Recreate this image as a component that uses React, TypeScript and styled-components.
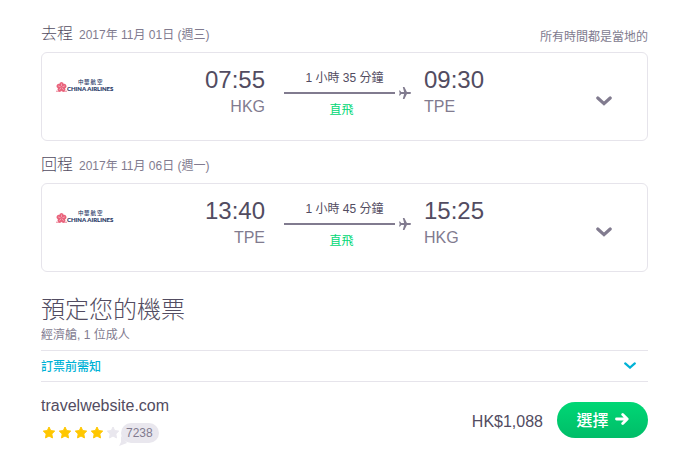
import React from "react";
import styled, { createGlobalStyle } from "styled-components";

const GlobalStyle = createGlobalStyle`
  *, *::before, *::after { box-sizing: border-box; }
  body {
    margin: 0;
    background: #fff;
    color: #524c61;
    font: 400 12px/18px "Liberation Sans", "Noto Sans CJK TC", sans-serif;
  }
  button { font-family: inherit; cursor: pointer; border: 0; background: none; padding: 0; }
  svg { display: block; flex: none; }
`;

const Page = styled.main`
  padding: 10px 38px 24px 41px;
`;

const LegHeader = styled.header`
  display: flex;
  align-items: baseline;
  height: 42px;
  padding-top: 12px;
`;

const LegTitle = styled.h2`
  margin: 0 6px 0 0;
  font-size: 16px;
  line-height: 24px;
  font-weight: 300;
`;

const Muted = styled.span`
  color: #817b8f;
`;

const LocalNote = styled(Muted)`
  margin-left: auto;
  align-self: flex-start;
  padding-top: 6px;
`;

const Card = styled.section`
  display: grid;
  grid-template-columns: 223fr 159fr 137fr 86px;
  min-height: 89px;
  border: 1px solid #e6e4eb;
  border-radius: 6px;
`;

const Departure = styled.div`
  display: flex;
  justify-content: space-between;
  padding-left: 14px;
  text-align: right;
`;

const LogoBox = styled.div`
  padding-top: 26px;
`;

const Stop = styled.div`
  padding-top: 12px;
`;

const Time = styled.div`
  font-size: 24px;
  line-height: 30px;
`;

const Airport = styled.div`
  font-size: 16px;
  line-height: 24px;
  color: #817b8f;
`;

const Route = styled.div`
  padding: 16px 13px 0 19px;
  text-align: center;
`;

const Duration = styled.div`
  padding-right: 6px;
`;

const Track = styled.div`
  display: flex;
  align-items: center;
  gap: 4px;
  height: 12px;
`;

const Line = styled.div`
  flex: 1;
  height: 2px;
  background: #817b8f;
`;

const Direct = styled.div`
  padding: 2px 12px 0 0;
  color: #00d775;
`;

const Toggle = styled.button`
  display: flex;
  align-items: center;
  justify-content: center;
  padding-top: 8px;
`;

const Booking = styled.section`
  padding-top: 22px;
`;

const BookingTitle = styled.h1`
  margin: 0;
  font-size: 24px;
  line-height: 32px;
  font-weight: 300;
`;

const Cabin = styled.p`
  margin: 0 0 6px;
  color: #817b8f;
`;

const Notice = styled.button`
  display: flex;
  align-items: center;
  justify-content: space-between;
  width: 100%;
  height: 32px;
  padding: 0 12px 2px 0;
  border-top: 1px solid #e6e4eb;
  border-bottom: 1px solid #e6e4eb;
  color: #00b2d6;
  font-size: 12px;
  font-weight: 500;
`;

const Offer = styled.div`
  display: flex;
  align-items: flex-start;
  padding-top: 12px;
`;

const Seller = styled.div`
  flex: 1;
  font-size: 16px;
  line-height: 24px;
`;

const Rating = styled.div`
  display: flex;
  align-items: center;
  gap: 2px;
  padding: 5px 0 0 1px;
`;

const Reviews = styled.span`
  position: relative;
  height: 20px;
  margin-left: -1px;
  padding: 0 6px 0 5px;
  border-radius: 10px;
  background: #e9e7ee;
  color: #817b8f;
  font-size: 12px;
  line-height: 20px;

  svg {
    position: absolute;
    left: -2px;
    bottom: -3px;
  }
`;

const Price = styled.div`
  padding: 16px 14px 0 0;
  font-size: 16px;
  line-height: 24px;
`;

const Select = styled.button`
  display: flex;
  align-items: center;
  justify-content: center;
  gap: 6px;
  width: 91px;
  height: 36px;
  margin-top: 8px;
  padding-bottom: 2px;
  border-radius: 18px;
  background: linear-gradient(#00d775, #00bd68);
  color: #fff;
  font-size: 16px;
  font-weight: 500;
`;

const petals = [0, 72, 144, 216, 288];

const AirlineLogo = () => (
  <svg width="58" height="14" viewBox="0 0 58 14" role="img" aria-label="China Airlines">
    <g fill="#e9627b">
      {petals.map((angle) => (
        <ellipse key={angle} cx="5.5" cy="5.4" rx="2.3" ry="2.5" transform={`rotate(${angle} 5.5 8)`} />
      ))}
    </g>
    <g stroke="#fff" strokeWidth=".4">
      {petals.map((angle) => (
        <path key={angle} d="M5.5 7V4.5" transform={`rotate(${angle} 5.5 8)`} />
      ))}
    </g>
    <path d="M0 12.2H4M7 12.2h4" stroke="#e9627b" strokeWidth=".8" />
    <text y="5" fontSize="5.5" fontWeight="500" fill="#263766">
      <tspan x="22">中</tspan>
      <tspan x="28">華</tspan>
      <tspan x="34.5">航</tspan>
      <tspan x="41">空</tspan>
    </text>
    <text x="11" y="12" fontSize="6" fontWeight="700" fill="#263766" stroke="#263766" strokeWidth=".15" fontFamily="Lato, sans-serif">
      CHINA AIRLINES
    </text>
  </svg>
);

const Plane = () => (
  <svg width="12" height="12" viewBox="0 0 12 12" fill="#817b8f" aria-hidden="true">
    <path d="M12 6c0-.6-.5-.9-1.2-.9H7.9L5.4 0H3.8l1.3 5.1H2.2L1 3.4H0L.7 6 0 8.6h1l1.2-1.7h2.9L3.8 12h1.6l2.5-5.1h2.9C11.5 6.9 12 6.6 12 6Z" />
  </svg>
);

const Chevron = ({ small }: { small?: boolean }) => (
  <svg width={small ? 12 : 16} height={small ? 8 : 10} viewBox={small ? "0 0 12 8" : "0 0 16 10"} fill="none" aria-hidden="true">
    <path
      d={small ? "M1.2 2.4 6 6.6 10.8 2.4" : "M1.8 2 8 7.6 14.2 2"}
      stroke={small ? "#00b2d6" : "#817b8f"}
      strokeWidth={small ? 2.2 : 3.2}
      strokeLinecap="round"
    />
  </svg>
);

const Star = ({ filled }: { filled: boolean }) => (
  <svg width="14" height="14" viewBox="0 0 14 14" fill={filled ? "#ffc700" : "#e9e7ee"} aria-hidden="true">
    <path
      d="m7 1 1.7 3.6 4 .5-2.9 2.8.7 4L7 10l-3.5 1.900.7-4-2.900-2.800 4-.5Z"
      stroke={filled ? "#ffc700" : "#e9e7ee"}
      strokeLinejoin="round"
    />
  </svg>
);

const Arrow = () => (
  <svg width="14" height="12" viewBox="0 0 14 12" fill="none" stroke="#fff" strokeWidth="2.8" strokeLinecap="round" strokeLinejoin="round" aria-hidden="true">
    <path d="M1.5 6H12M7.7 1.5 12.2 6l-4.500 4.500" />
  </svg>
);

interface Leg {
  title: string;
  date: string;
  depart: string;
  from: string;
  duration: string;
  arrive: string;
  to: string;
  note?: string;
}

const legs: Leg[] = [
  { title: "去程", date: "2017年 11月 01日 (週三)", depart: "07:55", from: "HKG", duration: "1 小時 35 分鐘", arrive: "09:30", to: "TPE", note: "所有時間都是當地的" },
  { title: "回程", date: "2017年 11月 06日 (週一)", depart: "13:40", from: "TPE", duration: "1 小時 45 分鐘", arrive: "15:25", to: "HKG" },
];

const FlightLeg = ({ leg }: { leg: Leg }) => (
  <>
    <LegHeader>
      <LegTitle>{leg.title}</LegTitle>
      <Muted>{leg.date}</Muted>
      {leg.note && <LocalNote>{leg.note}</LocalNote>}
    </LegHeader>
    <Card>
      <Departure>
        <LogoBox>
          <AirlineLogo />
        </LogoBox>
        <Stop>
          <Time>{leg.depart}</Time>
          <Airport>{leg.from}</Airport>
        </Stop>
      </Departure>
      <Route>
        <Duration>{leg.duration}</Duration>
        <Track>
          <Line />
          <Plane />
        </Track>
        <Direct>直飛</Direct>
      </Route>
      <Stop>
        <Time>{leg.arrive}</Time>
        <Airport>{leg.to}</Airport>
      </Stop>
      <Toggle type="button" aria-label={`${leg.title} ${leg.from} ${leg.to}`}>
        <Chevron />
      </Toggle>
    </Card>
  </>
);

export default function App() {
  return (
    <>
      <GlobalStyle />
      <Page>
        {legs.map((leg) => (
          <FlightLeg key={leg.title} leg={leg} />
        ))}
        <Booking>
          <BookingTitle>預定您的機票</BookingTitle>
          <Cabin>經濟艙, 1 位成人</Cabin>
          <Notice type="button">
            訂票前需知
            <Chevron small />
          </Notice>
          <Offer>
            <Seller>
              travelwebsite.com
              <Rating>
                {[1, 2, 3, 4, 5].map((n) => (
                  <Star key={n} filled={n <= 4} />
                ))}
                <Reviews>
                  <svg width="12" height="10" viewBox="0 0 12 10" fill="#e9e7ee" aria-hidden="true">
                    <path d="M2 0v6L0 10l8-3Z" />
                  </svg>
                  7238
                </Reviews>
              </Rating>
            </Seller>
            <Price>HK$1,088</Price>
            <Select type="button">
              選擇
              <Arrow />
            </Select>
          </Offer>
        </Booking>
      </Page>
    </>
  );
}
